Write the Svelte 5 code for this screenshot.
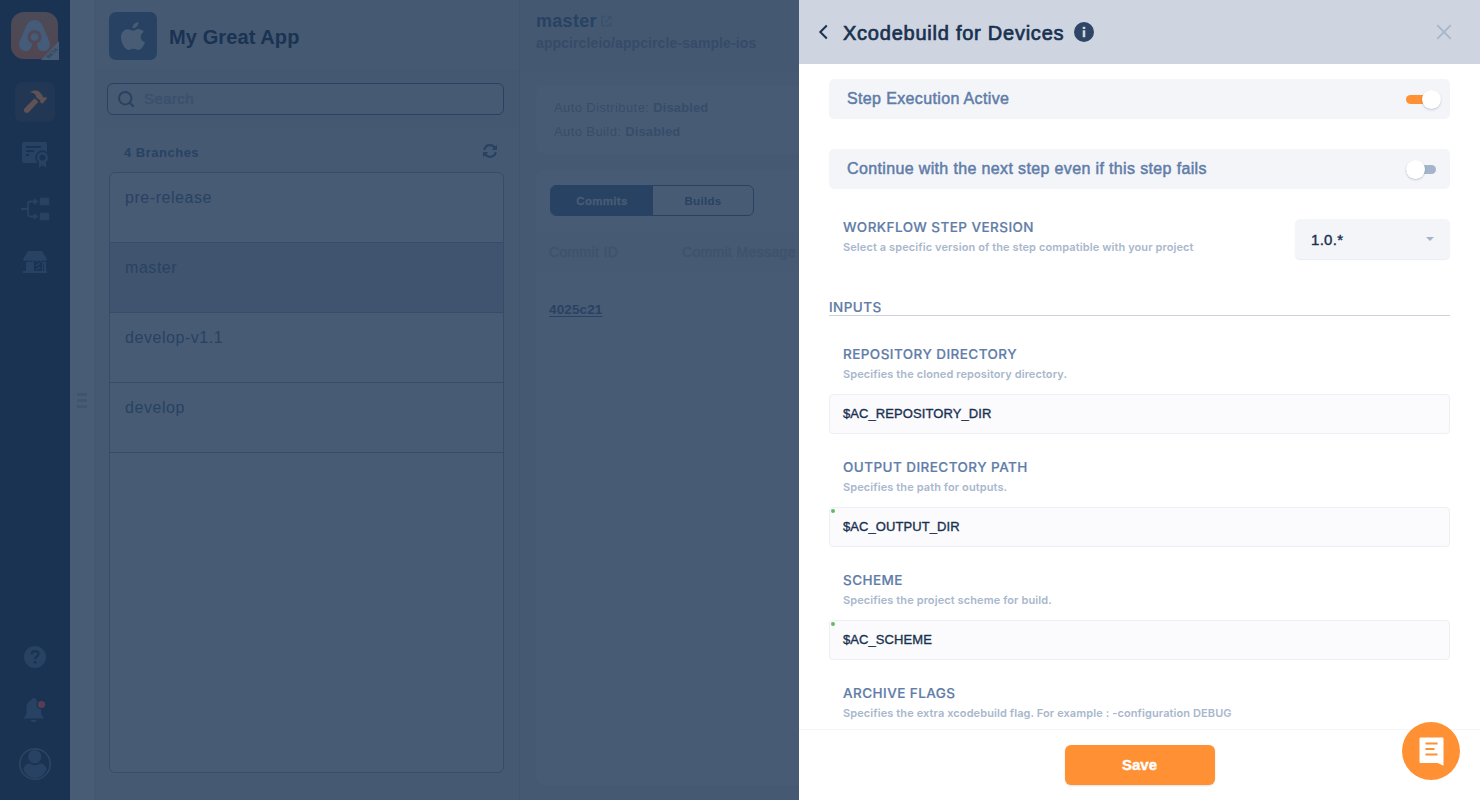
<script>
  const branches = [
    { name: 'pre-release' },
    { name: 'master', active: true },
    { name: 'develop-v1.1' },
    { name: 'develop' }
  ];
  const toggles = [
    { label: 'Step Execution Active', on: true },
    { label: 'Continue with the next step even if this step fails', on: false }
  ];
  const fields = [
    { label: 'REPOSITORY DIRECTORY', hint: 'Specifies the cloned repository directory.', value: '$AC_REPOSITORY_DIR', dot: false },
    { label: 'OUTPUT DIRECTORY PATH', hint: 'Specifies the path for outputs.', value: '$AC_OUTPUT_DIR', dot: true },
    { label: 'SCHEME', hint: 'Specifies the project scheme for build.', value: '$AC_SCHEME', dot: true },
    { label: 'ARCHIVE FLAGS', hint: 'Specifies the extra xcodebuild flag. For example : -configuration DEBUG', value: '', dot: false }
  ];
</script>

<div class="app">
  <nav class="side">
    <svg class="logo" width="48" height="49" viewBox="0 0 48 49">
      <defs>
        <linearGradient id="lg" x1="0" y1="0" x2="0" y2="1">
          <stop offset="0" stop-color="#4b4b57" />
          <stop offset="1" stop-color="#514651" />
        </linearGradient>
      </defs>
      <rect width="47" height="47" rx="13" fill="url(#lg)" />
      <path d="M23.500 8c3.500 0 6 1.600 7.600 4.800l7.300 16.600c1.600 4.200-.8 9.600-5.900 9.600-5.500 0-6.400-4.500-6.700-9.600h-4.600c-.3 5.100-1.200 9.600-6.700 9.600-5.100 0-7.500-5.400-5.900-9.600l7.300-16.600C17.500 9.600 20 8 23.500 8z" fill="#445c79" />
      <circle cx="23.500" cy="25" r="7" fill="#4f4856" />
      <path d="M21 29h5v6l3 5h-11l3-5z" fill="#504753" />
      <circle cx="23.500" cy="25" r="3.800" fill="#445c79" />
      <path d="M30 48L48 29v19z" fill="#485c75" />
      <text x="37.500" y="47" transform="rotate(-44 37.500 47)" font-size="5" font-weight="700" fill="#2c4360">BETA</text>
    </svg>
    <div class="tile">
      <svg width="26" height="26" viewBox="0 0 26 26" fill="#5f5154">
        <path d="M9 3.200C12 .8 16.500 1 18.800 3.200l2.400 2.900c.5.700.4 1.700.8 2.200l1.200.3 1.200-.9L26 9.500l-4.700 5.200-2.100-1.500-.1-1.900c-1.200-.6-2.500-1.500-3.300-2.600-.9-1-.9-2.100-1.300-3C13.300 4 11 3.600 9 3.200z" />
        <path d="M13.600 9.300l3.900 3.500L8 23c-1.200 1.300-3 1.300-4.200.2s-1.200-2.900.1-4.100z" />
      </svg>
    </div>
    <svg class="n1" width="26" height="27" viewBox="0 0 26 27">
      <rect width="25" height="21" rx="2" fill="#284263" />
      <path d="M4 5h15M4 9h8M4 13h3" stroke="#1a3352" stroke-width="2" />
      <circle cx="20.500" cy="15.500" r="7.200" fill="#1a3352" />
      <path d="M17 19h7v7l-3.500-3L17 26z" fill="#284263" />
      <circle cx="20.500" cy="15.500" r="4.300" fill="none" stroke="#284263" stroke-width="2.400" />
    </svg>
    <svg class="n2" width="29" height="24" viewBox="0 0 29 24">
      <path d="M0 12h7M14 4.500H9.500Q7 4.500 7 7v10q0 2.500 2.500 2.500H14" fill="none" stroke="#284263" stroke-width="1.800" />
      <path d="M13 1.500l4 3-4 3zM13 16.500l4 3-4 3zM19 1h9v7h-9zM19 16h9v7h-9z" fill="#284263" stroke="#284263" stroke-width=".6" />
    </svg>
    <svg class="n3" width="24" height="23" viewBox="0 0 24 23">
      <path d="M5 0h14l5 8c0 2-3 3-4 1-1 2-3 2-4 0-1 2-3 2-4 0-1 2-3 2-4 0-1 2-3 2-4 0-1 2-4 1-4-1z" fill="#284263" />
      <path d="M3 11h8v9h8v-9h4v9h1v2H0v-2h3z" fill="#284263" />
      <path d="M13 15l4-3M13 19l4-3" stroke="#284263" stroke-width="1.400" />
      <path d="M20.500 12v8" stroke="#1a3352" />
    </svg>
    <svg class="n4" width="24" height="24" viewBox="0 0 24 24">
      <circle cx="12" cy="12" r="11" fill="#284263" />
      <path d="M8.700 9.300c0-2 1.400-3.200 3.400-3.200s3.400 1.200 3.400 3c0 2.300-3.300 2.400-3.300 5.200" fill="none" stroke="#1a3352" stroke-width="2.200" />
      <circle cx="12.100" cy="17.300" r="1.400" fill="#1a3352" />
    </svg>
    <svg class="n5" width="24" height="25" viewBox="0 0 24 25">
      <path d="M10.800 0c1.500 0 2.300 1 2.300 2.200 3.300 1 5 3.300 5 7.300v5c0 2.500 1.300 3.500 2.800 6H.7c1.500-2.500 2.800-3.500 2.800-6v-5c0-4 1.700-6.300 5-7.300C8.500 1 9.300 0 10.800 0zM7.800 22h6c-.4 1.300-1.400 2.200-3 2.200s-2.600-.9-3-2.200z" fill="#284263" />
      <circle cx="18.500" cy="6.500" r="5" fill="#1a3352" />
      <circle cx="18.500" cy="6.500" r="3.600" fill="#5a3d55" />
    </svg>
    <svg class="n6" width="32" height="32" viewBox="0 0 32 32">
      <circle cx="16" cy="16" r="15.200" fill="none" stroke="#2b4461" stroke-width="1.700" />
      <circle cx="15.700" cy="8.800" r="6.700" fill="#284263" />
      <path d="M4.500 22c0-4 3-6.500 6.500-6.500 3 2.200 7 2.200 10 0 3.500 0 6.500 2.500 6.500 6.500C25 27 21 30 16 30S7 27 4.500 22z" fill="#284263" />
    </svg>
  </nav>

  <div class="grip"><i></i><i></i><i></i></div>

  <section class="left">
    <header class="apphead">
      <div class="apple">
        <svg width="24" height="28" viewBox="0 0 24 28" fill="#485c75">
          <path d="M17.500 0c.3 3.200-2.700 6.400-6 6.300C11.300 3.200 14.400.2 17.500 0zM17.300 7c2.200 0 4.200 1 5.500 2.800-4.600 2.800-3.800 8.800 1.200 10.500-1.200 3.300-3.800 7.700-6.600 7.700-1.800 0-2.500-1.200-4.800-1.200-2.400 0-3.200 1.200-4.900 1.200C4.200 28 0 21 0 15.500 0 10.200 3.300 7.200 6.800 7.200c2.300 0 4 1.500 5.500 1.500 1.400 0 3-1.700 5-1.700z" />
        </svg>
      </div>
      <h1>My Great App</h1>
    </header>
    <div class="searchrow">
      <div class="search">
        <svg width="17" height="17" viewBox="0 0 17 17" fill="none" stroke="#284263" stroke-width="2">
          <circle cx="7.200" cy="7.200" r="6.200" /><path d="M11.700 11.700l4 4" />
        </svg>
        <span>Search</span>
      </div>
    </div>
    <div class="count">
      <span>4 Branches</span>
      <svg width="14" height="14" viewBox="0 0 14 14" fill="none" stroke="#284263" stroke-width="2.200">
        <path d="M1.200 6C2 2.600 4 1.200 7 1.200c2 0 3.600.8 4.700 2.600M12.800 8c-.8 3.400-2.800 4.800-5.800 4.800-2 0-3.600-.8-4.700-2.600" />
        <path d="M14 .8V6H8.800zM0 13.200V8h5.200z" fill="#284263" stroke="none" />
      </svg>
    </div>
    <div class="list">
      {#each branches as b}
        <div class="branch" class:active={b.active}>{b.name}</div>
      {/each}
    </div>
  </section>

  <section class="right">
    <header>
      <h2>master
        <svg width="11" height="12" viewBox="0 0 11 12" fill="none" stroke="#3a5270" stroke-width="1.500">
          <path d="M4.500 1.500H1v9.300h8.500V7" /><path d="M4.500 7.500L8.500 3" /><path d="M5.500.6h5v5z" fill="#3a5270" stroke="none" />
        </svg>
      </h2>
      <p>appcircleio/appcircle-sample-ios</p>
    </header>
    <div class="card auto">
      <div>Auto Distribute: <b>Disabled</b></div>
      <div>Auto Build: <b>Disabled</b></div>
    </div>
    <div class="card commits">
      <div class="tabs"><span class="on">Commits</span><span>Builds</span></div>
      <div class="thead"><span>Commit ID</span><span>Commit Message</span></div>
      <div class="hash">4025c21</div>
    </div>
  </section>

  <aside>
    <header class="dh">
      <svg width="10" height="16" viewBox="0 0 10 16" fill="none" stroke="#193150" stroke-width="2"><path d="M8.800 1.500L2.300 8l6.500 6.500" /></svg>
      <h2>Xcodebuild for Devices</h2>
      <svg class="info" width="20" height="20" viewBox="0 0 20 20">
        <circle cx="10" cy="10" r="10" fill="#2e4565" />
        <path d="M8.700 8.200h2.600v7H8.700zM8.700 4.700h2.600v2.200H8.700z" fill="#ced5e0" />
      </svg>
      <svg class="close" width="16" height="16" viewBox="0 0 16 16" stroke="#a6b7cd" stroke-width="1.800"><path d="M1.200 1.200l13.600 13.600M14.800 1.200L1.200 14.800" /></svg>
    </header>
    <div class="body">
      {#each toggles as t}
        <div class="toggle">
          <span>{t.label}</span>
          <div class="switch" class:on={t.on}><i></i></div>
        </div>
      {/each}
      <div class="version">
        <div>
          <h3>WORKFLOW STEP VERSION</h3>
          <p>Select a specific version of the step compatible with your project</p>
        </div>
        <div class="select"><span>1.0.*</span><i></i></div>
      </div>
      <h3 class="inputs">INPUTS</h3>
      {#each fields as f}
        <div class="field">
          <h3>{f.label}</h3>
          <p>{f.hint}</p>
          <div class="input">{f.value}{#if f.dot}<i></i>{/if}</div>
        </div>
      {/each}
    </div>
    <footer><button>Save</button></footer>
  </aside>

  <div class="chat">
    <svg width="26" height="29" viewBox="0 0 26 29">
      <path d="M1.500.5h23q1 0 1 1V28.500c-3-.5-3.500-2.500-8-2.500h-15q-1 0-1-1V1.500q0-1 1-1z" fill="#fff" />
      <path d="M7.500 6.500h12M7.500 12h9M7.500 17.500h12" stroke="#ff9033" stroke-width="2" />
    </svg>
  </div>
</div>

<style>
  :global(body) { margin: 0; }
  h1, h2, h3, p { margin: 0; font-weight: 400; }
  svg { display: block; flex: none; }
  .app { position: relative; display: flex; width: 1480px; height: 800px; overflow: hidden; background: #465973; font-family: "Liberation Sans", Arial, sans-serif; color: #284263; }

  .side { width: 70px; box-sizing: border-box; padding-top: 12px; background: #1a3352; display: flex; flex-direction: column; align-items: center; flex: none; }
  .logo { overflow: hidden; }
  .tile { width: 40px; height: 40px; border-radius: 7px; background: #213754; margin-top: 21px; display: flex; align-items: center; justify-content: center; }
  .tile svg { margin: -1px 2px 0 0; }
  .n1 { margin-top: 20px; }
  .n2 { margin-top: 28px; }
  .n3 { margin-top: 30px; }
  .n4 { margin-top: 371px; }
  .n5 { margin-top: 29px; }
  .n6 { margin-top: 25px; }

  .grip { width: 24px; background: #485c75; display: flex; flex-direction: column; gap: 3px; align-items: center; justify-content: center; flex: none; }
  .grip i { width: 10px; height: 3px; background: #40546f; }

  .left { width: 426px; box-sizing: border-box; border-left: 2px solid #445872; border-right: 1px solid #40546e; display: flex; flex-direction: column; flex: none; }
  .apphead { height: 70px; border-bottom: 1px solid #43576f; display: flex; align-items: center; padding-left: 13px; }
  .apple { width: 48px; height: 48px; margin-top: 2px; border-radius: 7px; background: #284263; display: flex; align-items: center; justify-content: center; }
  h1 { font-size: 20px; font-weight: 700; color: #1a3352; margin: 4px 0 0 12px; letter-spacing: .1px; }
  .searchrow { height: 56px; background: #445872; border-bottom: 1px solid #43576f; padding: 12px 15px 0 11px; box-sizing: border-box; }
  .search { height: 32px; box-sizing: border-box; border: 1px solid #284263; border-radius: 6px; background: #465a73; display: flex; align-items: center; padding-left: 10px; gap: 9px; font-size: 15px; color: #3a506d; -webkit-text-stroke: .5px; letter-spacing: .4px; }
  .search span { margin-top: -1px; }
  .count { height: 45px; display: flex; align-items: center; justify-content: space-between; padding: 3px 22px 0 28px; box-sizing: border-box; font-size: 13px; font-weight: 700; letter-spacing: .5px; }
  .count span { margin-top: 2px; }
  .list { margin-left: 13px; width: 395px; height: 601px; box-sizing: border-box; border: 1px solid #354d6a; border-radius: 6px; background: #475b74; }
  .branch { height: 70px; box-sizing: border-box; border-bottom: 1px solid #354d6a; padding: 15px 15px; font-size: 16px; line-height: 20px; letter-spacing: .55px; }
  .active { background: #40546f; }

  .right { width: 279px; flex: none; }
  .right header { height: 71px; box-sizing: border-box; background: #445871; padding: 10px 0 0 16px; }
  .right h2 { font-size: 18px; line-height: 22px; font-weight: 700; display: flex; gap: 4px; align-items: center; letter-spacing: .3px; }
  .right header p { font-size: 14px; line-height: 20px; margin-top: 1px; font-weight: 700; color: #354b68; letter-spacing: .1px; }
  .card { margin-left: 16px; background: #485b75; border-radius: 8px 0 0 8px; box-sizing: border-box; }
  .auto { margin-top: 15px; height: 68px; padding: 10px 18px; font-size: 13px; line-height: 24px; color: #364d69; letter-spacing: .4px; }
  .auto b { letter-spacing: .1px; }
  .commits { margin-top: 16px; height: 615px; padding-top: 15px; }
  .tabs { margin-left: 14px; width: 204px; height: 31px; box-sizing: border-box; border: 1px solid #284263; border-radius: 6px; overflow: hidden; display: flex; font-size: 11.500px; font-weight: 700; line-height: 30px; letter-spacing: .3px; }
  .tabs span { flex: 1; text-align: center; }
  .tabs .on { background: #284263; color: #485c75; flex: 0 0 102px; -webkit-text-stroke: .3px; }
  .thead { margin-top: 15px; height: 42px; background: #465a73; display: flex; align-items: center; padding-left: 13px; font-size: 14px; white-space: nowrap; color: #3e536d; -webkit-text-stroke: .5px; letter-spacing: .35px; }
  .thead span:first-child { width: 133px; }
  .hash { padding: 27px 0 0 13px; font-size: 13.500px; font-weight: 700; line-height: 20px; letter-spacing: .12px; text-decoration: underline; text-underline-offset: 2px; }

  aside { width: 681px; height: 800px; flex: none; background: #fff; display: flex; flex-direction: column; color: #193150; }
  .dh { height: 64px; flex: none; background: #ced5e0; display: flex; align-items: center; padding: 0 28px 0 19px; box-sizing: border-box; }
  .dh h2 { margin: 3px 0 0 15px; font-size: 20px; -webkit-text-stroke: .7px; letter-spacing: .76px; }
  .info { margin-left: 10px; }
  .close { margin-left: auto; }
  .body { flex: 1; min-height: 0; overflow: hidden; padding: 15px 30px 0; }
  .toggle { height: 40px; border-radius: 5px; background: #f4f5f9; margin-bottom: 30px; display: flex; align-items: center; justify-content: space-between; padding: 0 9px 0 18px; color: #5f7da8; font-size: 16px; -webkit-text-stroke: .5px; letter-spacing: .36px; }
  .toggle span { margin-top: -1px; }
  .switch { width: 35px; height: 19px; display: flex; align-items: center; position: relative; }
  .switch::before { content: ""; width: 30px; height: 9px; border-radius: 5px; background: #a3b4cb; }
  .switch.on::before { background: #ff9033; }
  .switch i { position: absolute; left: 0; top: 0; width: 19px; height: 19px; border-radius: 50%; background: #fff; box-shadow: 0 1px 2px rgba(40, 60, 90, .25); }
  .switch.on i { left: 16px; }
  .version { display: flex; justify-content: space-between; padding-left: 14px; height: 41px; }
  h3 { font-family: Inter, sans-serif; font-weight: 500; font-size: 13.500px; line-height: 16px; color: #5f7da8; letter-spacing: .44px; -webkit-text-stroke: .2px; }
  .body p { font-family: Inter, sans-serif; font-weight: 600; font-size: 11px; line-height: 16px; color: #a9b7cd; margin-top: 4px; letter-spacing: .1px; }
  .select { width: 155px; height: 40px; box-sizing: border-box; border-radius: 5px; background: #f4f5f9; box-shadow: 0 1px 1px #e8ebf1; display: flex; align-items: center; justify-content: space-between; padding: 0 16px 0 16px; font-size: 15px; -webkit-text-stroke: .4px; letter-spacing: .3px; }
  .select i { border: 4px solid transparent; border-top-color: #a3b4cb; border-bottom: 0; }
  .inputs { margin-top: 39px; border-bottom: 1px solid #ccd3df; }
  .field { margin-top: 30px; height: 83px; }
  .field h3, .field p { padding-left: 14px; }
  .input { position: relative; margin-top: 12px; height: 40px; box-sizing: border-box; border: 1px solid #eeeff5; border-radius: 4px; background: #fbfbfd; padding-left: 13px; font-size: 13px; line-height: 38px; -webkit-text-stroke: .35px; letter-spacing: .08px; }
  .input i { position: absolute; left: 1px; top: 1px; width: 4px; height: 4px; border-radius: 50%; background: #62bb5f; }
  footer { height: 71px; flex: none; box-sizing: border-box; border-top: 1px solid #f5f5f7; display: flex; justify-content: center; padding-top: 15px; }
  button { width: 150px; height: 40px; border: 0; border-radius: 6px; background: #ff9033; color: #fff; font: 700 15px "Liberation Sans", Arial, sans-serif; box-shadow: 0 1px 2px rgba(0, 0, 0, .12); -webkit-text-stroke: .4px; padding: 0 0 1px; display: flex; align-items: center; justify-content: center; }
  .chat { position: absolute; left: 1402px; top: 722px; width: 58px; height: 58px; border-radius: 50%; background: #ff9033; display: flex; align-items: center; justify-content: center; }
</style>
